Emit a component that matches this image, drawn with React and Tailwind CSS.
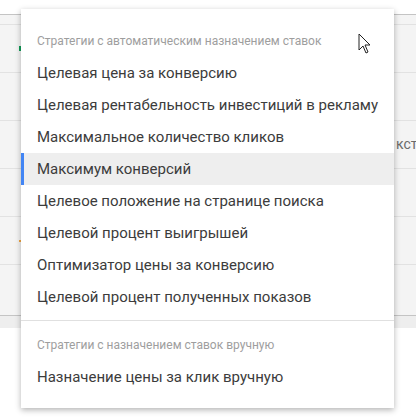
import React from 'react';

const autoItems = [
  'Целевая цена за конверсию',
  'Целевая рентабельность инвестиций в рекламу',
  'Максимальное количество кликов',
  'Максимум конверсий',
  'Целевое положение на странице поиска',
  'Целевой процент выигрышей',
  'Оптимизатор цены за конверсию',
  'Целевой процент полученных показов',
];

const MenuItem = ({ label, active }) => (
  <div
    className={
      active
        ? 'relative flex h-8 items-center bg-[#eeeeee] pl-4 text-[15px] text-[#3c3c3c]'
        : 'relative flex h-8 items-center pl-4 text-[15px] text-[#3c3c3c]'
    }
  >
    {active && <span className="absolute left-0 top-0 h-full w-[3px] bg-[#4285f4]"></span>}
    <span className="whitespace-nowrap">{label}</span>
  </div>
);

const App = () => {
  return (
    <div className="relative h-[420px] w-[416px] overflow-hidden bg-white font-['Roboto',sans-serif]">
      {/* page behind the dropdown */}
      <div className="h-[14px] bg-white"></div>
      <div className="border-t border-b border-[#c4c4c4] bg-[#f4f4f4]">
        <div className="h-[10px] border-b border-[#e2e2e2]"></div>
        <div className="flex h-[48px] items-center border-b border-[#e2e2e2]">
          <span className="ml-[19px] h-[5px] w-[2px] bg-[#0f9d58]"></span>
        </div>
        <div className="h-[48px] border-b border-[#e2e2e2]"></div>
        <div className="flex h-[48px] items-center border-b border-[#e2e2e2]">
          <span className="ml-[396px] whitespace-nowrap text-[14px] text-[#6b6b6b]">кстн</span>
        </div>
        <div className="h-[48px] border-b border-[#e2e2e2]"></div>
        <div className="flex h-[48px] items-center border-b border-[#e2e2e2]">
          <span className="ml-[19px] h-[2px] w-[2px] bg-[#f4a742]"></span>
        </div>
        <div className="h-[50px]"></div>
      </div>
      <div className="h-[12px] bg-[#eeeeee]"></div>

      {/* dropdown */}
      <div className="absolute left-[21px] top-[9px] w-[373px] bg-white shadow-[0_2px_6px_rgba(0,0,0,0.3)]">
        <div className="pt-4 pb-[7px]">
          <div className="flex h-8 items-center pl-4 text-[12px] text-[#9e9e9e] whitespace-nowrap">
            Стратегии с автоматическим назначением ставок
          </div>
          {autoItems.map((item) => (
            <MenuItem key={item} label={item} active={item === 'Максимум конверсий'} />
          ))}
        </div>
        <div className="border-t border-[#e0e0e0] pt-2 pb-[15px]">
          <div className="flex h-8 items-center pl-4 text-[12px] text-[#9e9e9e] whitespace-nowrap">
            Стратегии с назначением ставок вручную
          </div>
          <MenuItem label="Назначение цены за клик вручную" />
        </div>
      </div>

      {/* mouse pointer */}
      <svg className="absolute left-[358px] top-[33px]" width="14" height="21" viewBox="0 0 14 21">
        <path
          d="M1 1 L1 17 L5 13 L8 20 L10 19 L7 12 L12 12 Z"
          fill="#ffffff"
          stroke="#222222"
          strokeWidth="1"
          strokeLinejoin="round"
        />
      </svg>
    </div>
  );
};

export default App;
